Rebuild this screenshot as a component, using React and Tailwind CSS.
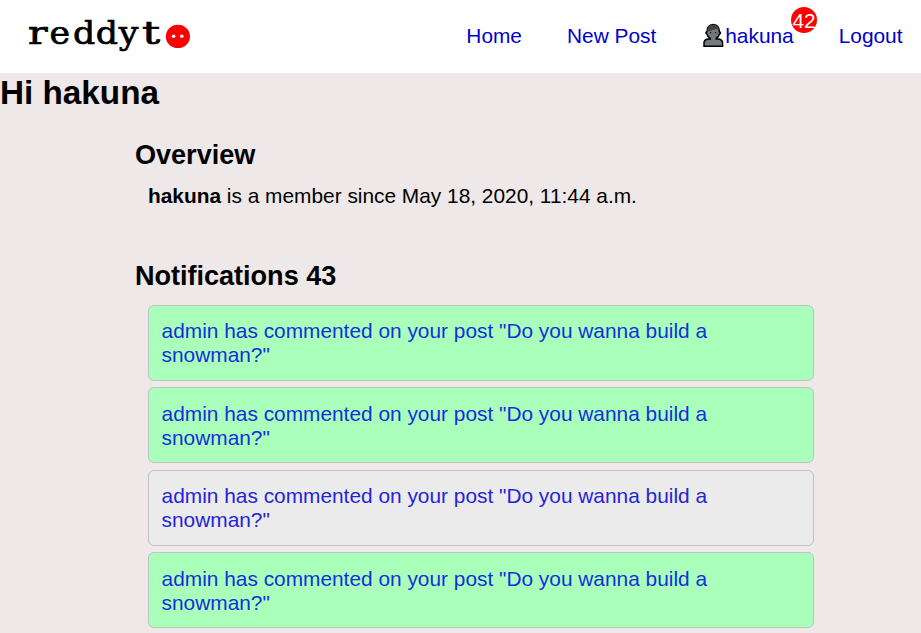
const notifications = [
  { id: 1, unread: true },
  { id: 2, unread: true },
  { id: 3, unread: false },
  { id: 4, unread: true },
];

function Logo() {
  return (
    <a className="ml-[28px] flex items-start">
      <span className="mt-[14px] w-[137px] origin-left scale-x-[1.085] whitespace-nowrap font-['DejaVu_Serif','Liberation_Mono',monospace] text-[32px] leading-[38px] text-black [-webkit-text-stroke:0.7px_black]">
        <span className="mr-[4.6px] inline-block origin-left scale-x-[1.18]">r</span>
        <span className="tracking-[2.6px]">e</span>
        <span className="tracking-[0.6px]">dd</span>
        <span className="tracking-[3.6px]">y</span>
        <span className="inline-block origin-left scale-x-[1.3]">t</span>
      </span>
      <svg className="mt-[24px] h-[25px] w-[25px]" viewBox="0 0 25 25">
        <ellipse cx="12.9" cy="12.4" rx="12.1" ry="11.7" fill="#f00" />
        <circle cx="8.6" cy="12.3" r="1.8" fill="#fff" />
        <circle cx="16.8" cy="12.3" r="1.8" fill="#fff" />
      </svg>
    </a>
  );
}

function UserIcon() {
  return (
    <svg className="mt-[23px] h-[25px] w-[22px] shrink-0" viewBox="0 0 22 25" preserveAspectRatio="none">
      <path d="M1 23.3v-3.3q0-3.4 4-4.1h10.6q4 .7 4 4.1v3.3z" fill="#777b80" stroke="#000" strokeWidth="1.5" />
      <path d="M4 8.8Q1.8 9.8 4 11.2 5.6 15.8 10.2 16 14.9 15.8 16.4 11.2 18.6 9.8 16.4 8.8 16.4 1.8 10.2 1.5 4 1.8 4 8.8z" fill="#74787c" stroke="#000" strokeWidth="1.5" />
      <path d="M8 14.8v2.4q2.3 1.2 4.5 0v-2.4z" fill="#777b80" />
      <path d="M4.3 8.8Q4 2 10.2 1.8 16.3 2 16.1 8.8L13.7 5.7Q8 7.5 4.3 8.8z" fill="#404246" />
      <path d="M7.6 9v1.3M12.7 9v1.3" stroke="#111" strokeWidth="1.1" />
    </svg>
  );
}

function Notification({ unread }) {
  return (
    <a
      className={`block h-[76px] rounded-[6px] border border-[#c0c3c0] px-[12.6px] pt-[13.35px] leading-[24px] ${
        unread ? "bg-[#aaffbb] text-[#1130dc]" : "bg-[#ecebeb] text-[#2424d8]"
      }`}
    >
      admin has commented on your post "Do you wanna build a snowman?"
    </a>
  );
}

export default function App() {
  return (
    <div className="h-[633px] overflow-hidden bg-[#eee8e8] font-['Liberation_Sans',Arial,sans-serif] text-[20.87px] leading-[24px] text-black">
      <header className="flex h-[73px] items-start justify-between bg-white pr-[18.5px]">
        <Logo />
        <nav className="flex items-start text-[#0000cc]">
          <a className="mt-[24px] mr-[45px]">Home</a>
          <a className="mt-[24px] mr-[47px]">New Post</a>
          <a className="relative mr-[45px] flex items-start">
            <UserIcon />
            <span className="mt-[24px]">hakuna</span>
            <span className="absolute -right-[23.4px] top-[7px] h-[26px] w-[26px] rounded-full bg-[#ff0000] text-center leading-[28px] text-white">42</span>
          </a>
          <a className="mt-[24px]">Logout</a>
        </nav>
      </header>
      <h1 className="text-[33.28px] font-bold leading-[39px]">Hi hakuna</h1>
      <main className="ml-[135px] w-[679px]">
        <h2 className="mt-[27px] text-[27.1px] font-bold leading-[31px] tracking-[-0.03px]">Overview</h2>
        <p className="mt-[14px] ml-[13px]"><b>hakuna</b> is a member since May 18, 2020, 11:44 a.m.</p>
        <h2 className="mt-[52px] text-[27.1px] font-bold leading-[31px] tracking-[-0.03px]">Notifications 43</h2>
        <div className="mt-[14px] ml-[13px] flex flex-col gap-[6.4px]">
          {notifications.map((item) => (
            <Notification key={item.id} unread={item.unread} />
          ))}
        </div>
      </main>
    </div>
  );
}
